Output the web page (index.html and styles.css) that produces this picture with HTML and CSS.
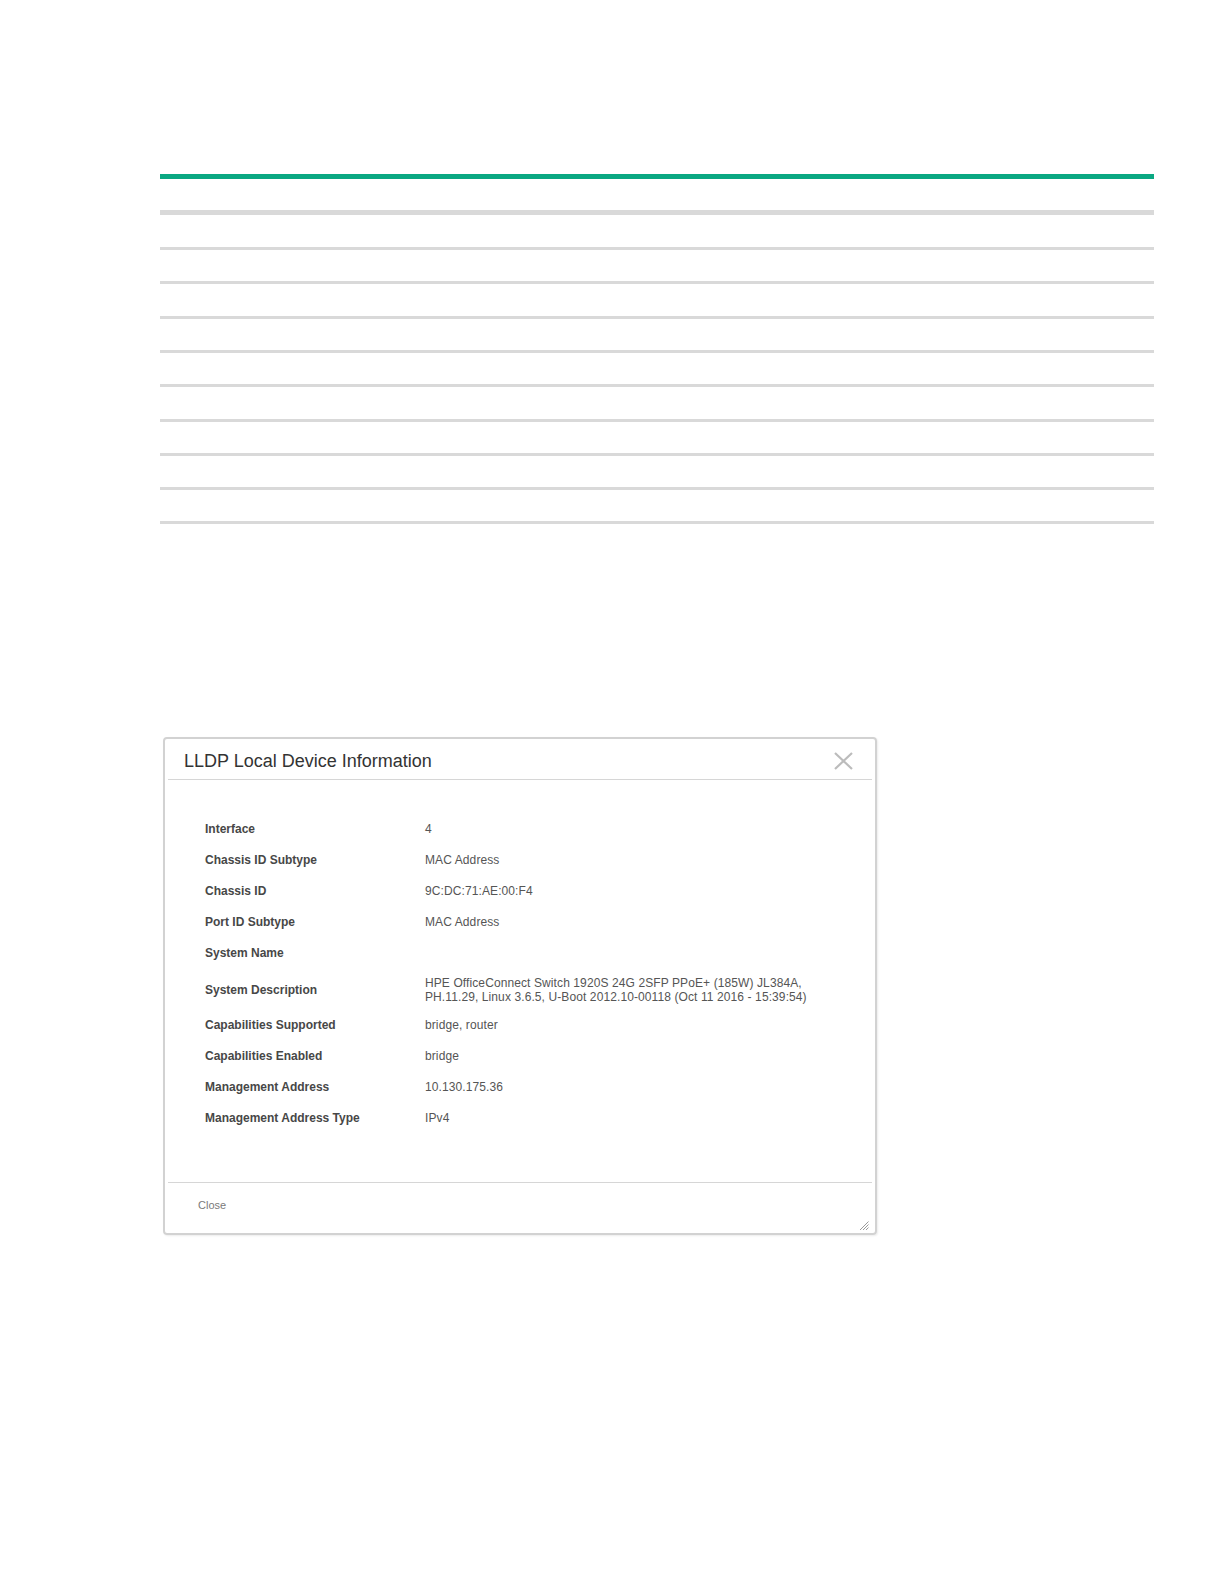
FILE: index.html
```html
<!DOCTYPE html>
<html>
<head>
<meta charset="utf-8">
<link rel="stylesheet" href="styles.css">
</head>
<body>
<div class="page">
  <div class="table-lines">
    <div class="green-bar"></div>
    <div class="line thick"></div>
    <div class="line wide"></div>
    <div class="line"></div>
    <div class="line wide"></div>
    <div class="line"></div>
    <div class="line"></div>
    <div class="line wide"></div>
    <div class="line"></div>
    <div class="line"></div>
    <div class="line"></div>
  </div>

  <div class="dialog">
    <div class="dialog-header">
      <span class="dialog-title">LLDP Local Device Information</span>
      <svg class="close-x" width="19" height="18" viewBox="0 0 19 18">
        <path d="M1 1 L18 17 M18 1 L1 17" stroke="#bcbcbc" stroke-width="2.2" fill="none"/>
      </svg>
    </div>
    <div class="dialog-body">
      <table class="info">
        <tr><td class="lbl">Interface</td><td class="val">4</td></tr>
        <tr><td class="lbl">Chassis ID Subtype</td><td class="val">MAC Address</td></tr>
        <tr><td class="lbl">Chassis ID</td><td class="val">9C:DC:71:AE:00:F4</td></tr>
        <tr><td class="lbl">Port ID Subtype</td><td class="val">MAC Address</td></tr>
        <tr><td class="lbl">System Name</td><td class="val"></td></tr>
        <tr class="tall"><td class="lbl">System Description</td><td class="val">HPE OfficeConnect Switch 1920S 24G 2SFP PPoE+ (185W) JL384A,<br>PH.11.29, Linux 3.6.5, U-Boot 2012.10-00118 (Oct 11 2016 - 15:39:54)</td></tr>
        <tr><td class="lbl">Capabilities Supported</td><td class="val">bridge, router</td></tr>
        <tr><td class="lbl">Capabilities Enabled</td><td class="val">bridge</td></tr>
        <tr><td class="lbl">Management Address</td><td class="val">10.130.175.36</td></tr>
        <tr><td class="lbl">Management Address Type</td><td class="val">IPv4</td></tr>
      </table>
    </div>
    <div class="dialog-footer">
      <span class="close-btn">Close</span>
      <svg class="grip" width="10" height="9" viewBox="0 0 10 9">
        <path d="M9.5 0.5 L1 9 M9.5 3.5 L4 9 M9.5 6.5 L7 9" stroke="#9a9a9a" stroke-width="1" fill="none"/>
      </svg>
    </div>
  </div>
</div>
</body>
</html>
```

FILE: styles.css
```css
html, body {
  margin: 0;
  padding: 0;
  background: #ffffff;
}
.page {
  font-family: "Liberation Sans", Arial, sans-serif;
  padding-top: 174px;
  padding-bottom: 300px;
}
.table-lines {
  margin-left: 160px;
  width: 994px;
  display: flex;
  flex-direction: column;
}
.green-bar {
  height: 5px;
  background: #0aa882;
}
.line {
  height: 3px;
  background: #d9d9d9;
  margin-top: 31px;
}
.line.wide {
  margin-top: 32px;
}
.line.thick {
  height: 5px;
  margin-top: 31px;
}
.dialog {
  margin-top: 213px;
  margin-left: 163px;
  width: 714px;
  height: 498px;
  box-sizing: border-box;
  border: 2px solid #d2d2d2;
  border-radius: 4px;
  padding: 0 3px;
  display: flex;
  flex-direction: column;
  box-shadow: 1px 1px 2px rgba(0,0,0,0.08);
}
.dialog-header {
  height: 40px;
  border-bottom: 1px solid #d6d6d6;
  display: flex;
  align-items: center;
  justify-content: space-between;
  padding: 0 19px 0 16px;
}
.dialog-title {
  font-size: 18px;
  color: #333333;
  line-height: 22px;
  padding-top: 3px;
}
.close-x {
  display: block;
  margin-top: 4px;
}
.dialog-body {
  padding: 34px 0 48px 37px;
  flex: 0 0 auto;
}
.info {
  border-collapse: collapse;
}
.info td {
  font-size: 12px;
  line-height: 14px;
  padding: 8px 0 9px 0;
  vertical-align: middle;
  height: 14px;
}
.info tr.tall td {
  padding: 7px 0 6px 0;
}
.lbl {
  width: 220px;
  font-weight: bold;
  color: #474747;
}
.val {
  color: #555555;
  letter-spacing: 0.1px;
}
.dialog-footer {
  border-top: 1px solid #d6d6d6;
  flex: 1;
  position: relative;
  display: flex;
  align-items: center;
  padding-left: 30px;
  padding-bottom: 7px;
}
.close-btn {
  font-size: 11px;
  color: #7a7a7a;
}
.grip {
  position: absolute;
  right: 3px;
  bottom: 3px;
}
```
